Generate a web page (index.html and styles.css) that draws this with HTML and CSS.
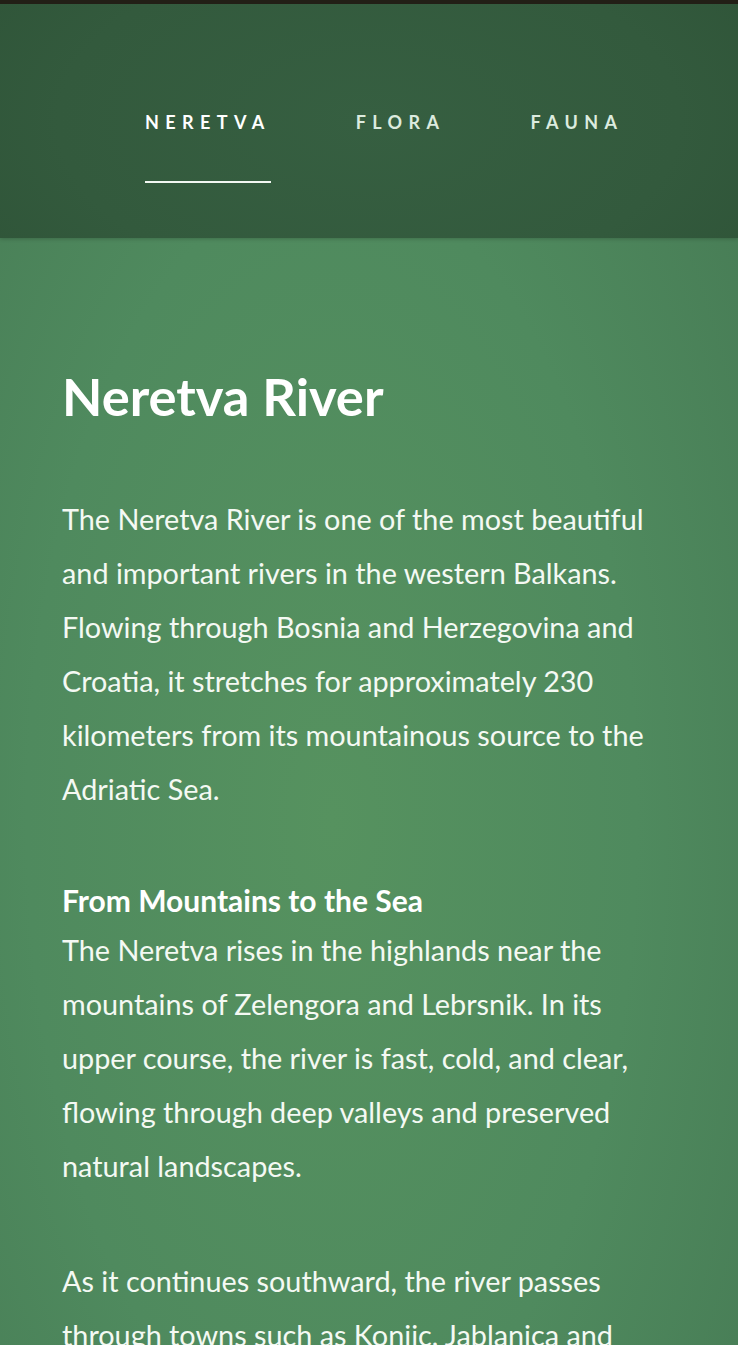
FILE: index.html
```html
<!DOCTYPE html>
<html lang="en">
<head>
<meta charset="utf-8">
<title>Neretva</title>
<link rel="stylesheet" href="styles.css">
</head>
<body>
<header class="site-header">
  <nav class="nav">
    <a class="nav-link active" href="#">NERETVA</a>
    <a class="nav-link" href="#">FLORA</a>
    <a class="nav-link" href="#">FAUNA</a>
  </nav>
</header>
<main class="content">
  <h1 class="title">Neretva River</h1>
  <p class="text">The Neretva River is one of the most beautiful and important rivers in the western Balkans. Flowing through Bosnia and Herzegovina and Croatia, it stretches for approximately 230 kilometers from its mountainous source to the Adriatic Sea.</p>
  <h2 class="subtitle">From Mountains to the Sea</h2>
  <p class="text">The Neretva rises in the highlands near the mountains of Zelengora and Lebrsnik. In its upper course, the river is fast, cold, and clear, flowing through deep valleys and preserved natural landscapes.</p>
  <p class="text">As it continues southward, the river passes through towns such as Konjic, Jablanica and Mostar, where it becomes wider and calmer before reaching the delta near the sea.</p>
</main>
</body>
</html>
```
FILE: styles.css
```css
html, body {
  margin: 0;
  padding: 0;
}
body {
  font-family: Lato, "Open Sans", sans-serif;
  color: #fff;
  background: #4d875b;
  border-top: 4px solid #221f16;
}
.site-header {
  height: 234px;
  background:
    radial-gradient(ellipse 70% 120% at 50% 50%, #365f41 0%, #335a3d 60%, #2e5337 100%);
  box-shadow: 0 1px 4px rgba(0,0,0,0.2);
  position: relative;
  z-index: 1;
}
.nav {
  display: flex;
  gap: 85px;
  padding: 108px 0 0 145px;
}
.nav-link {
  color: #dcebdf;
  text-decoration: none;
  font-size: 18px;
  font-weight: 700;
  letter-spacing: 6.4px;
  line-height: 20px;
  padding-bottom: 49px;
}
.nav-link.active {
  color: #ffffff;
  border-bottom: 2px solid #f2f7f2;
}
.content {
  min-height: 1107px;
  padding: 126px 62px 0 62px;
  background:
    radial-gradient(ellipse 75% 90% at 45% 45%, #56925f 0%, #4f8a5e 55%, #467a54 100%);
  overflow: hidden;
}
.title {
  margin: 0 0 64px;
  font-size: 52.5px;
  font-weight: 700;
  line-height: 64px;
  color: #fff;
}
.text {
  margin: 0 0 61px;
  font-size: 28.8px;
  font-weight: 400;
  line-height: 54px;
  color: #f4f9f3;
}
.subtitle {
  margin: 0;
  font-size: 30px;
  font-weight: 700;
  line-height: 46px;
  color: #fff;
}
```
